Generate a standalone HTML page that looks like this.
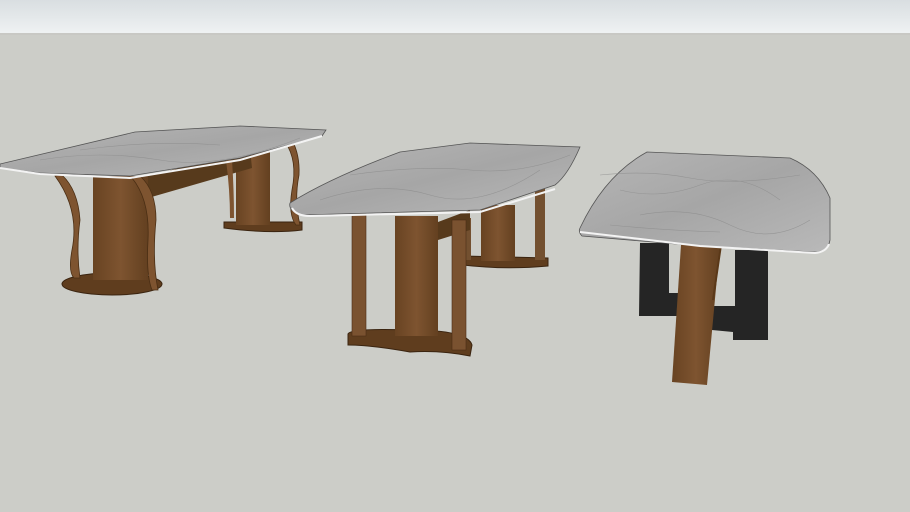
<!DOCTYPE html>
<html><head><style>
html,body{margin:0;padding:0;width:910px;height:512px;overflow:hidden;background:#cccdc8}
svg{display:block}
</style></head><body>
<svg width="910" height="512" viewBox="0 0 910 512" xmlns="http://www.w3.org/2000/svg">
<defs>
<linearGradient id="sky" x1="0" y1="0" x2="0" y2="1"><stop offset="0" stop-color="#d9dee1"/><stop offset="1" stop-color="#eff2f3"/></linearGradient>
<linearGradient id="wood" x1="0" y1="0" x2="1" y2="0"><stop offset="0" stop-color="#684322"/><stop offset="0.5" stop-color="#7e5430"/><stop offset="1" stop-color="#634020"/></linearGradient>
<linearGradient id="marble" x1="0" y1="0" x2="1" y2="1"><stop offset="0" stop-color="#b6b6b6"/><stop offset="0.5" stop-color="#a6a6a6"/><stop offset="1" stop-color="#b9b9b9"/></linearGradient>
</defs>
<rect width="910" height="34" fill="url(#sky)"/>
<rect y="33" width="910" height="2" fill="#c8c8c4"/>

<!-- Table 1 -->
<ellipse cx="112" cy="284" rx="50" ry="11" fill="#5f3d1e" stroke="#3a2410"/>
<path d="M224 222 L302 222 L302 230 Q270 234 224 228Z" fill="#5f3d1e" stroke="#3a2410"/>
<rect x="236" y="150" width="34" height="75" fill="url(#wood)"/>
<path d="M140 178 L250 150 L252 168 L148 198Z" fill="#573a1c"/>
<rect x="93" y="176" width="55" height="104" fill="url(#wood)"/>
<path d="M55 176 Q80 210 72 250 Q68 272 74 278 L80 278 Q76 250 80 220 Q78 190 62 175Z" fill="#7e5430" stroke="#4a2e14" stroke-width="0.8"/>
<path d="M132 178 Q150 200 148 240 Q146 275 152 290 L158 290 Q152 260 156 220 Q156 190 140 176Z" fill="#7e5430" stroke="#4a2e14" stroke-width="0.8"/>
<path d="M285 142 Q298 160 292 190 Q288 215 296 225 L300 225 Q294 200 299 175 Q300 155 292 140Z" fill="#7e5430" stroke="#4a2e14" stroke-width="0.8"/>
<path d="M226 160 Q230 190 230 218 L234 218 Q234 190 232 160Z" fill="#7e5430"/>
<path d="M0 164 L135 132 L240 126 L326 130 L322 136 L240 158 L130 176 L40 173 L0 168Z" fill="url(#marble)" stroke="#555" stroke-width="0.8"/>
<path d="M0 168 L40 174 L130 178 L240 160 L322 136" fill="none" stroke="#f3f3f3" stroke-width="2"/>

<!-- Table 2 -->
<path d="M463 256 L548 258 L548 266 Q505 270 463 265Z" fill="#5f3d1e" stroke="#3a2410"/>
<rect x="481" y="205" width="34" height="56" fill="url(#wood)"/>
<rect x="535" y="188" width="10" height="72" fill="#735030"/>
<rect x="462" y="218" width="9" height="42" fill="#735030"/>
<path d="M348 334 Q350 328 410 330 Q468 330 472 345 L470 356 Q440 350 410 352 Q370 345 348 345Z" fill="#5f3d1e" stroke="#3a2410"/>
<rect x="395" y="216" width="43" height="120" fill="url(#wood)"/>
<path d="M438 222 L470 210 L470 230 L438 240Z" fill="#573a1c"/>
<rect x="352" y="214" width="14" height="122" fill="#7a5230" stroke="#4a2e14" stroke-width="0.6"/>
<rect x="452" y="220" width="14" height="130" fill="#7a5230" stroke="#4a2e14" stroke-width="0.6"/>
<path d="M290 203 Q330 178 400 152 L470 143 L580 147 Q568 175 555 185 L480 210 L300 215 Q288 210 290 203Z" fill="url(#marble)" stroke="#555" stroke-width="0.8"/>
<path d="M292 208 Q296 216 310 216 L480 212 L555 189" fill="none" stroke="#f3f3f3" stroke-width="2"/>

<!-- Table 3 -->
<path d="M640 243 L669 243 L669 293 L680 293 L680 316 L639 316Z" fill="#252525"/>
<path d="M735 250 L768 250 L768 340 L733 340 L733 332 L712 330 L712 306 L735 306Z" fill="#252525"/>
<path d="M681 245 L720 245 L707 385 L672 382Z" fill="url(#wood)"/>
<path d="M720 245 L722 245 L714 300 L712 300Z" fill="#5a3818"/>
<path d="M580 228 Q605 175 647 152 L790 158 Q818 170 830 198 L830 240 Q828 252 815 252 L700 246 L582 236 Q578 232 580 228Z" fill="url(#marble)" stroke="#555" stroke-width="0.8"/>
<path d="M580 232 L700 246 L815 253 Q826 252 829 244" fill="none" stroke="#f3f3f3" stroke-width="2"/>
<g stroke="#8a8a8a" stroke-width="0.6" fill="none" opacity="0.7">
<path d="M620 190 Q660 200 700 185 T780 200"/><path d="M640 215 Q690 205 730 225 T810 220"/>
<path d="M600 175 Q650 170 690 178 T800 175"/><path d="M610 225 Q660 230 720 232"/>
<path d="M320 200 Q380 180 430 195 T540 170"/><path d="M350 175 Q420 165 470 170 T570 155"/>
<path d="M40 160 Q100 150 160 160 T300 138"/><path d="M80 150 Q150 140 220 145"/>
</g>
</svg>
</body></html>
